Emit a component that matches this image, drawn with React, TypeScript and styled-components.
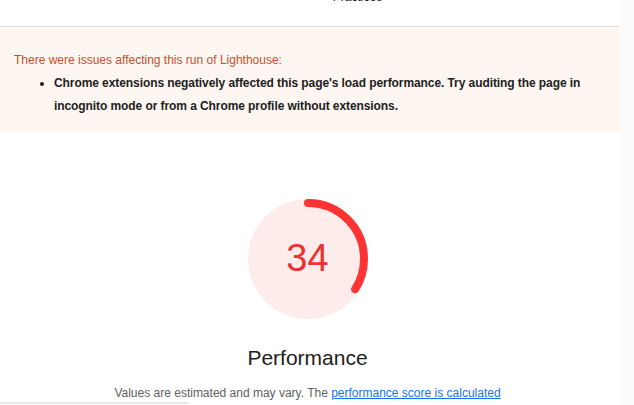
import styled, { createGlobalStyle } from "styled-components";

const GlobalStyle = createGlobalStyle`
    html, body {
        margin: 0;
        padding: 0;
        background: #ffffff;
    }
    body {
        font-family: "Liberation Sans", Arial, sans-serif;
        color: #212121;
        overflow: hidden;
    }
`;

const Page = styled.div`
    display: flex;
    height: 405px;
`;

const Main = styled.main`
    width: 620px;
    display: flex;
    flex-direction: column;
`;

const Gutter = styled.div`
    flex: 1;
    background: #fbfbfb;
`;

const TopHeader = styled.div`
    height: 26px;
    border-bottom: 1px solid #e0e0e0;
    overflow: hidden;
    display: flex;
    justify-content: center;
`;

// bottom of the "Best Practices" gauge label, scrolled mostly out of view
const GaugeLabelCut = styled.div`
    margin-top: -9px;
    margin-left: 95px;
    font-size: 12px;
    line-height: 13px;
    color: #212121;
`;

const Warning = styled.section`
    margin-top: 2px;
    height: 102px;
    box-sizing: border-box;
    padding: 22px 14px 0;
    background: #fef6f1;
`;

const WarningTitle = styled.div`
    font-size: 12px;
    line-height: 18px;
    color: #c4502a;
`;

const WarningList = styled.ul`
    margin: 3px 0 0;
    padding-left: 40px;
    font-size: 12px;
    line-height: 23px;
    font-weight: 700;
    letter-spacing: -0.08px;
    color: #212121;
`;

const Category = styled.section`
    display: flex;
    flex-direction: column;
    align-items: center;
    padding-right: 5px;
    margin-top: 68px;
`;

const GaugeWrap = styled.div`
    position: relative;
    width: 120px;
    height: 120px;
`;

const GaugeSvg = styled.svg`
    display: block;
    transform: rotate(-90deg);
`;

const GaugeValue = styled.div`
    position: absolute;
    inset: 0;
    display: flex;
    align-items: center;
    justify-content: center;
    font-size: 38px;
    color: #eb3232;
    padding-bottom: 2px;
`;

const CategoryTitle = styled.h2`
    margin: 27px 0 0;
    font-size: 21px;
    line-height: 24px;
    font-weight: 400;
    color: #212121;
`;

const Description = styled.p`
    margin: 15px 0 0;
    font-size: 12px;
    line-height: 16px;
    color: #616161;

    a {
        color: #1a73e8;
        text-decoration: underline;
    }
`;

const Divider = styled.div`
    width: 188px;
    height: 2px;
    margin-top: 1px;
    background: #e6e6e6;
`;

function Gauge({ score }: { score: number }) {
    const r = 56;
    const c = 2 * Math.PI * r;
    return (
        <GaugeWrap>
            <GaugeSvg width={120} height={120} viewBox="0 0 120 120">
                <circle cx={60} cy={60} r={r} fill="#feeceb" stroke="#feeceb" strokeWidth={8} />
                <circle
                    cx={60}
                    cy={60}
                    r={r}
                    fill="none"
                    stroke="#f33"
                    strokeWidth={8}
                    strokeLinecap="round"
                    strokeDasharray={`${(score / 100) * c} ${c}`}
                />
            </GaugeSvg>
            <GaugeValue>{score}</GaugeValue>
        </GaugeWrap>
    );
}

function App() {
    return (
        <Page>
            <GlobalStyle />
            <Main>
                <TopHeader>
                    <GaugeLabelCut>Practices</GaugeLabelCut>
                </TopHeader>
                <Warning>
                    <WarningTitle>There were issues affecting this run of Lighthouse:</WarningTitle>
                    <WarningList>
                        <li>
                            Chrome extensions negatively affected this page's load performance. Try auditing the page in
                            incognito mode or from a Chrome profile without extensions.
                        </li>
                    </WarningList>
                </Warning>
                <Category>
                    <Gauge score={34} />
                    <CategoryTitle>Performance</CategoryTitle>
                    <Description>
                        Values are estimated and may vary. The <a href="#">performance score is calculated</a>
                    </Description>
                </Category>
                <Divider />
            </Main>
            <Gutter />
        </Page>
    );
}

export default App;
